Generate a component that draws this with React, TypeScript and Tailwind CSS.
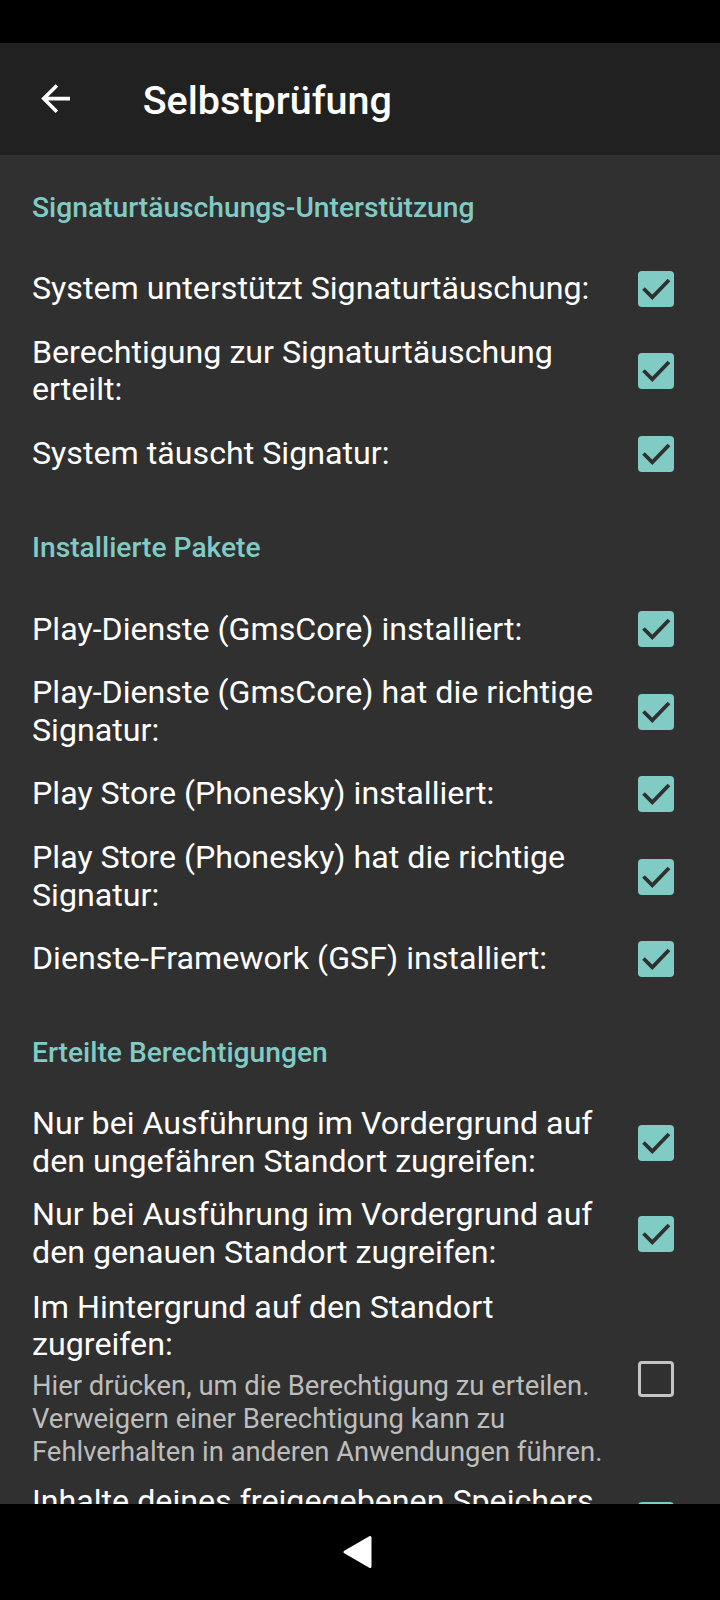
import React from "react";

type RowProps = { title: string; summary?: string; checked: boolean };

function CheckBox({ checked }: { checked: boolean }) {
  if (checked) {
    return (
      <div className="w-[36px] h-[36px] shrink-0 rounded-[4px] bg-[#80cbc4] flex items-center justify-center">
        <svg width="36" height="36" viewBox="0 0 36 36">
          <polyline
            points="5.5,17.5 14.3,26.3 31,9"
            fill="none"
            stroke="#303030"
            strokeWidth="3.8"
            strokeLinecap="butt"
            strokeLinejoin="miter"
          />
        </svg>
      </div>
    );
  }
  return <div className="w-[36px] h-[36px] shrink-0 rounded-[4px] border-[3.6px] border-[#c4c4c4]" />;
}

function Row({ title, summary, checked }: RowProps) {
  return (
    <div
      className={
        summary
          ? "flex items-center pl-[32px] pr-[46px] pt-[10px] pb-[6px]"
          : "flex items-center pl-[32px] pr-[46px] py-[8px] min-h-[74px]"
      }
    >
      <div className="flex-1 min-w-0 pr-[14px]">
        <div className="text-[32.2px] leading-[37.4px] text-white">{title}</div>
        {summary && <div className="mt-[6px] text-[27.4px] leading-[33px] text-[#bdbdbd]">{summary}</div>}
      </div>
      <CheckBox checked={checked} />
    </div>
  );
}

function Header({ text, first }: { text: string; first?: boolean }) {
  return (
    <div
      className={
        first
          ? "pl-[32px] pt-[36px] pb-[27px] text-[28.2px] leading-[34px] font-medium text-[#80cbc4]"
          : "pl-[32px] pt-[40.5px] pb-[27px] text-[28.2px] leading-[34px] font-medium text-[#80cbc4]"
      }
    >
      {text}
    </div>
  );
}

export default function App() {
  return (
    <div className="w-[720px] h-[1600px] flex flex-col bg-[#303030] overflow-hidden font-[family-name:Roboto,sans-serif]">
      <div className="h-[43px] shrink-0 bg-black" />
      <div className="h-[112px] shrink-0 bg-[#212121] flex items-center">
        <svg className="ml-[33.5px] shrink-0" width="43.2" height="43.2" viewBox="0 0 24 24">
          <path d="M20 11H7.83l5.59-5.59L12 4l-8 8 8 8 1.41-1.41L7.83 13H20v-2z" fill="#ffffff" />
        </svg>
        <div className="ml-[66px] mt-[4px] text-[39.5px] leading-[46px] font-medium text-white">Selbstprüfung</div>
      </div>
      <div className="flex-1 overflow-hidden">
        <Header text="Signaturtäuschungs-Unterstützung" first />
        <Row title="System unterstützt Signaturtäuschung:" checked />
        <Row title="Berechtigung zur Signaturtäuschung erteilt:" checked />
        <Row title="System täuscht Signatur:" checked />
        <Header text="Installierte Pakete" />
        <Row title="Play-Dienste (GmsCore) installiert:" checked />
        <Row title="Play-Dienste (GmsCore) hat die richtige Signatur:" checked />
        <Row title="Play Store (Phonesky) installiert:" checked />
        <Row title="Play Store (Phonesky) hat die richtige Signatur:" checked />
        <Row title="Dienste-Framework (GSF) installiert:" checked />
        <Header text="Erteilte Berechtigungen" />
        <Row title="Nur bei Ausführung im Vordergrund auf den ungefähren Standort zugreifen:" checked />
        <Row title="Nur bei Ausführung im Vordergrund auf den genauen Standort zugreifen:" checked />
        <Row
          title="Im Hintergrund auf den Standort zugreifen:"
          summary="Hier drücken, um die Berechtigung zu erteilen. Verweigern einer Berechtigung kann zu Fehlverhalten in anderen Anwendungen führen."
          checked={false}
        />
        <Row title="Inhalte deines freigegebenen Speichers lesen:" checked />
      </div>
      <div className="h-[96px] shrink-0 bg-black flex items-center justify-center">
        <svg className="ml-[-6px]" width="32" height="36" viewBox="0 0 32 36">
          <path d="M4 18 L29 3.5 L29 32.5 Z" fill="#ffffff" stroke="#ffffff" strokeWidth="3" strokeLinejoin="round" />
        </svg>
      </div>
    </div>
  );
}
